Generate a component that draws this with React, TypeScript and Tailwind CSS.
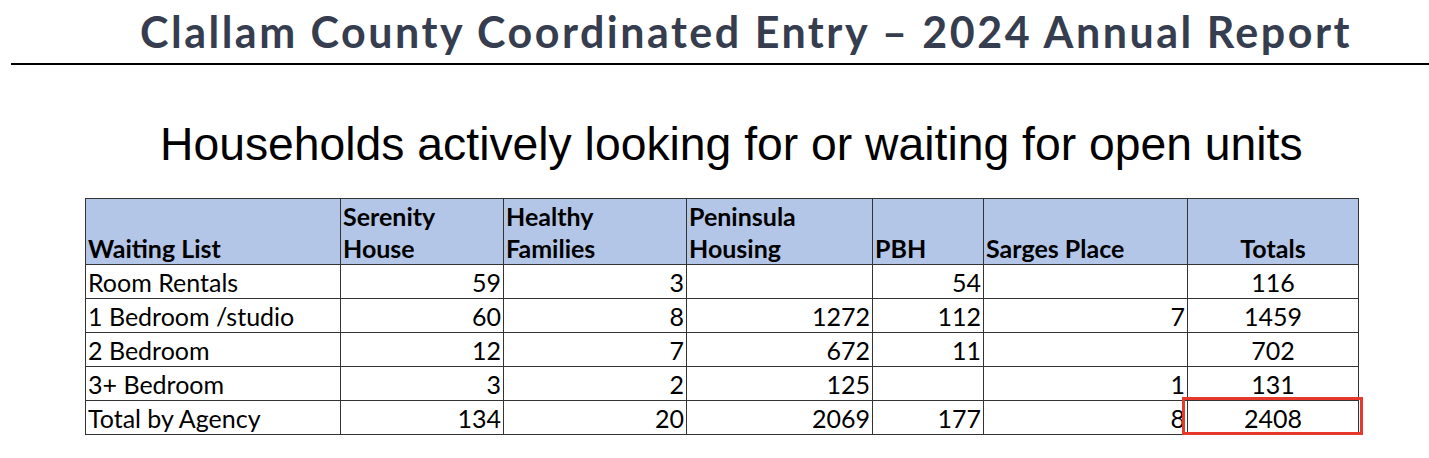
import React from "react";

const cols = [255, 163, 183, 186, 111, 204, 171];
const headers = [
  ["Waiting List"],
  ["Serenity", "House"],
  ["Healthy", "Families"],
  ["Peninsula", "Housing"],
  ["PBH"],
  ["Sarges Place"],
];
const rows: (string)[][] = [
  ["Room Rentals", "59", "3", "", "54", "", "116"],
  ["1 Bedroom /studio", "60", "8", "1272", "112", "7", "1459"],
  ["2 Bedroom", "12", "7", "672", "11", "", "702"],
  ["3+ Bedroom", "3", "2", "125", "", "1", "131"],
  ["Total by Agency", "134", "20", "2069", "177", "8", "2408"],
];

export default function App() {
  return (
    <div className="w-[1429px] h-[458px] bg-white overflow-hidden">
      <div className="pt-[6px] pl-[140px]">
        <h1
          className="text-[#353d4f] font-bold text-[43px] leading-[52px] tracking-[2.5px] whitespace-nowrap"
          style={{ fontFamily: 'Lato, "Open Sans", sans-serif' }}
        >
          Clallam County Coordinated Entry – 2024 Annual Report
        </h1>
      </div>
      <div className="ml-[11px] mt-[5px] h-[2px] bg-black" />
      <div
        className="mt-[54px] pl-[160px] text-black text-[46.3px] leading-[50px] whitespace-nowrap"
        style={{ fontFamily: '"Liberation Sans", Arial, sans-serif' }}
      >
        Households actively looking for or waiting for open units
      </div>
      <div className="mt-[29px] ml-[85px]">
        <table
          className="border-collapse text-black text-[25px]"
          style={{ fontFamily: 'Lato, "Open Sans", sans-serif' }}
        >
          <colgroup>
            {cols.map((w, i) => (
              <col key={i} style={{ width: w }} />
            ))}
          </colgroup>
          <thead>
            <tr className="bg-[#b4c6e7] h-[66px]">
              {headers.map((h, i) => (
                <th
                  key={i}
                  className="border border-[#333] align-bottom text-left font-bold leading-[32px] px-[2px] pb-0"
                >
                  {h.map((l, j) => (
                    <div key={j}>{l}</div>
                  ))}
                </th>
              ))}
              <th className="border border-[#333] align-bottom text-center font-bold leading-[32px] pb-0">
                Totals
              </th>
            </tr>
          </thead>
          <tbody>
            {rows.map((r, ri) => (
              <tr key={ri} className="h-[34px]">
                {r.map((c, ci) => (
                  <td
                    key={ci}
                    className={
                      "border border-[#333] leading-[32px] py-0 px-[2px] " +
                      (ci === 0 ? "text-left" : ci === 6 ? "text-center relative" : "text-right")
                    }
                  >
                    {c}
                    {ri === 4 && ci === 6 && (
                      <div className="absolute left-[-6px] right-[-5px] top-[-4px] bottom-[-1px] border-[3px] border-[#e5392b]" />
                    )}
                  </td>
                ))}
              </tr>
            ))}
          </tbody>
        </table>
      </div>
    </div>
  );
}
